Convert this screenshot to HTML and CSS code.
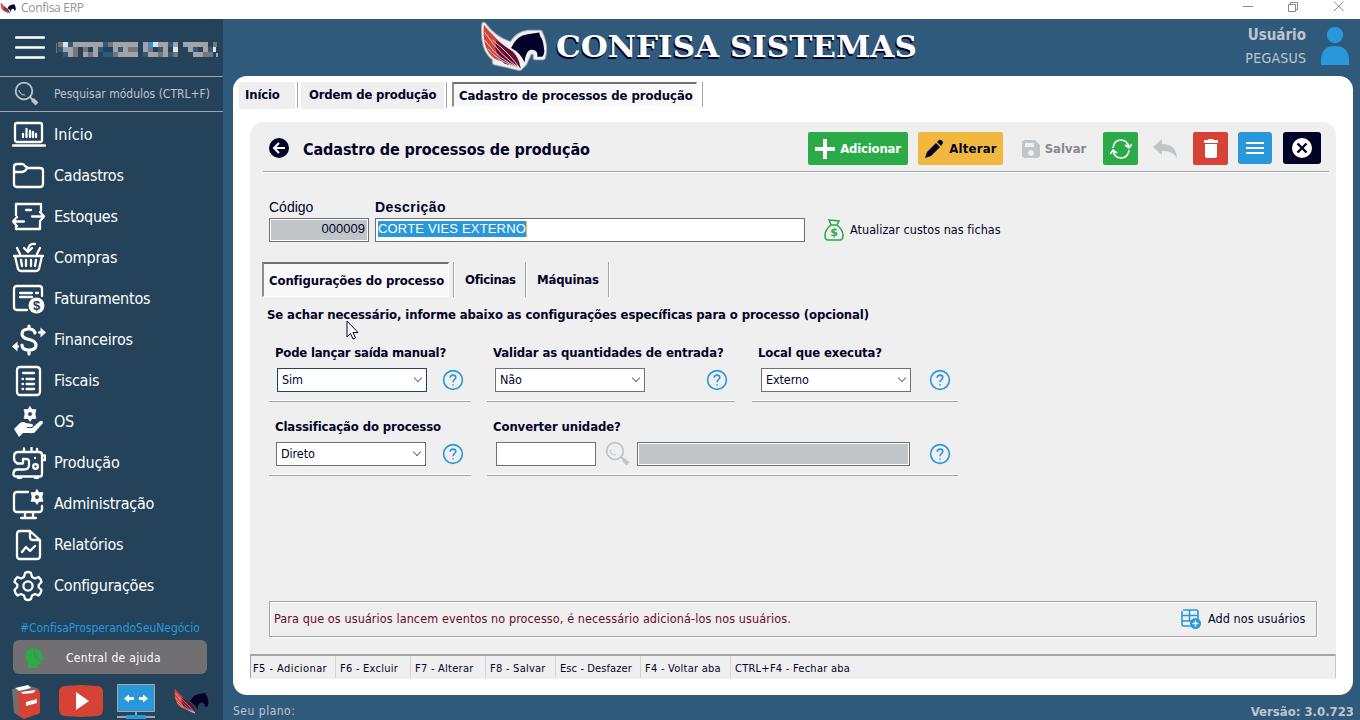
FILE: index.html
```html
<!DOCTYPE html>
<html lang="pt-BR">
<head>
<meta charset="utf-8">
<title>Confisa ERP</title>
<link rel="stylesheet" href="styles.css">
</head>
<body>
<svg class="defs" width="0" height="0">
  <defs>
    <symbol id="pegasus" viewBox="0 0 66 48">
      <path class="wing-a" d="M3 1C2 17 4 29 14 36L40 46C34 28 18 20 3 1Z"/>
      <path class="wing-b" d="M16 17L33 29Q39 35 41 46L24 41Q16 32 15 25Z"/>
      <path class="feather" d="M4 9Q20 33 40 46M4 17Q18 37 40 46M7 26Q20 40 40 46M12 17Q30 31 40 46"/>
      <path class="horse" d="M31 25Q37 12 48 11L60 9L61 13Q64 16 65 26Q66 31 63 34L58 34Q59 28 54 27Q49 26 47 31Q45 35 45 40Q41 30 31 25Z"/>
    </symbol>
    <symbol id="help" viewBox="0 0 22 22">
      <circle cx="11" cy="11" r="9.4"/><path d="M8.2 8.8Q8.2 6.1 11 6.1T13.8 8.6C13.8 10.5 11 10.6 11 13.2M11 15.2V16.6"/>
    </symbol>
    <symbol id="lens" viewBox="0 0 26 26">
      <circle cx="10" cy="10" r="8.3" stroke-width="1.8"/><path d="M5 9Q6 14 11 14" stroke-width="1.2"/><path d="M16 16L19 19" stroke-width="2"/><path d="M18.5 18.5L23 23" stroke-width="4"/>
    </symbol>
    <symbol id="gear" viewBox="0 0 32 32">
      <path d="M13 3Q16 1 19 3L20 7L23 8.500L26.500 7Q29 9 29.500 12L26.700 15V17.500L29.500 20Q29 23.500 26.500 25.500L23 24L20 25.500L19 29Q16 31 13 29L12 25.500L9 24L5.500 25.500Q3 23.500 2.500 20L5.300 17V14.500L2.500 12Q3 9 5.500 7L9 8.500L12 7Z"/><circle cx="16" cy="16" r="4.600"/>
    </symbol>
    <symbol id="cog" viewBox="0 0 16 16">
      <path class="cog-body" fill-rule="evenodd" d="M8 .5L10 3.500L14 3.500L13 8L14 12.500L10 12.500L8 15.500L6 12.500L2 12.500L3 8L2 3.500L6 3.500ZM8 5.700A2.300 2.300 0 1 0 8.010 5.700Z"/>
    </symbol>
  </defs>
</svg>

<header class="titlebar">
  <svg class="app-icon" width="16" height="12"><use href="#pegasus"/></svg>
  <span class="app-name">Confisa ERP</span>
  <svg class="window-controls" width="106" height="19" viewBox="0 0 106 19">
    <path d="M1 6.500H11M46.500 4.500H53.500V11.500H46.500ZM48.500 4V2.500H55.500V9.500H54M92 1.500L101.500 11M101.500 1.500L92 11"/>
  </svg>
</header>

<div class="shell">
  <aside class="sidebar">
    <div class="brand">
      <svg width="30" height="26" viewBox="0 0 30 26"><path class="burger" d="M1 2.500H29M1 12.500H29M1 22.500H29"/></svg>
      <svg class="masked" width="162" height="16" viewBox="56 42 162 16">
        <path class="m-gray" d="M73 42h30v5h-30zM113 42h25v5h-25zM143 42h5v10h-5zM158 42h10v5h-10zM173 42h5v5h-5zM183 42h25v5h-25zM63 47h10v5h-10zM93 47h5v10h-5zM113 47h5v5h-5zM123 47h5v5h-5zM163 47h5v5h-5zM188 47h5v5h-5zM203 47h5v5h-5zM68 52h5v5h-5zM83 52h5v5h-5zM118 52h20v5h-20zM148 52h10v5h-10zM163 52h5v5h-5zM193 52h10v5h-10zM216 53h2v4h-2z"/>
        <path class="m-dark" d="M56 43h1v10h-1zM58 42h5v5h-5zM108 42h5v5h-5zM213 42h4v5h-4zM73 47h5v5h-5zM83 47h5v5h-5zM128 47h10v5h-10zM148 47h5v5h-5zM73 52h5v5h-5zM88 52h5v5h-5zM113 52h5v5h-5zM158 52h5v5h-5zM173 52h5v5h-5zM203 52h10v5h-10z"/>
        <path class="m-blue" d="M68 42h5v5h-5zM103 42h5v5h-5zM168 42h5v5h-5zM58 47h5v5h-5zM98 47h5v5h-5zM118 47h5v5h-5zM158 47h5v5h-5zM193 47h5v5h-5zM208 47h5v5h-5zM63 52h5v5h-5zM103 52h10v5h-10zM143 52h5v5h-5zM168 52h5v5h-5z"/>
        <path class="m-light" d="M63 42h5v5h-5zM153 42h5v5h-5zM173 47h5v5h-5zM213 47h3v5h-3z"/>
        <path class="m-cyan" d="M148 42h5v5h-5z"/>
      </svg>
    </div>
    <div class="search">
      <svg class="lens-icon" width="26" height="26"><use href="#lens"/></svg>
      <span>Pesquisar módulos (CTRL+F)</span>
    </div>
    <nav class="menu">
      <a class="item"><svg viewBox="0 0 34 32"><rect x="3" y="4" width="27" height="19" rx="2"/><path d="M1 26.500H33M11 18V15M14.500 18V10M18 18V12M21 18V13M24 18V15"/></svg><span class="s-ini">Início</span></a>
      <a class="item"><svg viewBox="0 0 34 32"><path d="M2 7Q2 4 5 4H10Q12 4 13 6L16 8H28Q31 8 31 11V24Q31 27 28 27H5Q2 27 2 24ZM3 12H10Q13 12 15 8"/></svg><span>Cadastros</span></a>
      <a class="item"><svg viewBox="0 0 34 32"><path d="M4 14V3H29V10M4 24V28H28V21M14 9H19M20 15.500H32M28 11L32 15.500L28 20M12 20.500H1M5 16L1 20.500L5 25"/></svg><span>Estoques</span></a>
      <a class="item"><svg viewBox="0 0 34 32"><path d="M2 14H31M3 14L6 27Q7 29 9 29H24Q26 29 27 27L30 14M8 12L5 6M25 12L28 6M9 18L10 24M14 18V24M19 18V24M24 18L23 24M23 2Q16 1 16 9M12 6L16 10L20 6"/></svg><span class="s-com">Compras</span></a>
      <a class="item"><svg viewBox="0 0 34 32"><path d="M15 27H5Q2 27 2 24V6Q2 3 5 3H27Q30 3 30 6V13M8 10H20M24 10H26M8 14H20"/><circle class="solid" cx="24.500" cy="22.500" r="8"/><text class="coin" x="24.500" y="27">$</text></svg><span>Faturamentos</span></a>
      <a class="item"><svg viewBox="0 0 34 32"><path class="heavy" d="M23 9Q22 5 17 5Q10 5 10 10Q10 14 17 15.500Q24 17 24 21Q24 26 17 26Q10 26 10 21M17 2V5M17 26V30"/><path d="M27 8.500H31M6 22.500H2"/><path class="solid" d="M28.500 3.500L34 8.500L28.500 13.500ZM5.500 17.500L0 22.500L5.500 27.500Z"/></svg><span class="s-fin">Financeiros</span></a>
      <a class="item"><svg viewBox="0 0 34 32"><rect x="5" y="2" width="23" height="28" rx="3"/><path d="M11 8H22M14.500 14H22M14.500 19H22M14.500 24H22M10.500 14H11M10.500 19H11M10.500 24H11"/></svg><span>Fiscais</span></a>
      <a class="item"><svg viewBox="0 0 34 32"><use href="#cog" x="10" y="0" width="16" height="16"/><path class="solid" d="M2 23L8 17Q11 15 14 17L20 18Q22 19 20 21H15V22H20L28 15Q31 14 31 17L24 25Q22 28 18 27L11 27L7 31Z"/></svg><span>OS</span></a>
      <a class="item"><svg viewBox="0 0 34 32"><path d="M5 16Q2 15 2 10Q2 5 6 5H27Q30 5 30 8V27Q30 29.500 28 29.500H4Q1 29.500 1.500 26Q2 22.500 5 22.500H12Q17 22.500 17 18V14.500Q17 12 14 12H11V16.500H5M12 4V1.500M19.500 4V.5M25 4V2M30 8.500H33V13H30M6 31H9M23 31H26"/><circle cx="23.500" cy="19.500" r="2.300"/><path d="M23 11V11.200"/></svg><span class="s-pro">Produção</span></a>
      <a class="item"><svg viewBox="0 0 34 32"><path d="M16 4H5Q2 4 2 7V21Q2 24 5 24H27Q30 24 30 21V18M13 24V29M21 24V29M9 30H24"/><use href="#cog" x="17" y="1" width="16" height="16"/></svg><span>Administração</span></a>
      <a class="item"><svg viewBox="0 0 34 32"><path d="M8 2H18L28 11V27Q28 30 25 30H8Q5 30 5 27V5Q5 2 8 2ZM18 2V8Q18 11 21 11H28M10 23L14 18L18 22L23 17"/></svg><span>Relatórios</span></a>
      <a class="item"><svg viewBox="0 0 34 32"><use href="#gear" width="32" height="32"/></svg><span>Configurações</span></a>
    </nav>
    <div class="hashtag">#ConfisaProsperandoSeuNegócio</div>
    <button class="help-center">
      <svg width="20" height="22" viewBox="0 0 20 22"><path class="green" d="M3 20V15Q-1 10 2 4Q4 1 9 1V9L17 16L14 18Q13 17 12 18V21H3ZM10 1Q17 2 17 9L19 12L17 13V15L10 8Z"/></svg>
      <span>Central de ajuda</span>
    </button>
    <div class="dock">
      <svg width="30" height="36" viewBox="0 0 30 36"><path fill="#716f72" d="M0 5L18 2L27 5V30L9 33L2 29Z"/><path fill="#fff" d="M3 4L16 1L19 4L7 7Z"/><path fill="#d64235" d="M6 8L24 5L28 8V29L12 35L7 32Z"/><path fill="#fff" d="M9 8L24 6L21 9L11 10ZM14 18L25 15V19L14 22Z"/></svg>
      <svg width="44" height="36" viewBox="0 0 44 36"><path fill="#d64235" d="M5 2L22 1L39 2Q44 3 44 8V25Q44 31 39 32L22 33L5 32Q0 31 0 25V8Q0 3 5 2Z"/><path fill="#fff" d="M17 8L30 17L17 26Z"/></svg>
      <svg width="38" height="36" viewBox="0 0 38 36"><path fill="#2998da" stroke="#a3a5aa" d="M.5.5H37.500V27.500H.5Z"/><path stroke="#fff" stroke-width="3" d="M11 14.500H17M22 14.500H27"/><path fill="#fff" d="M7 14.500L12 10.500V18.500ZM31 14.500L26 10.500V18.500Z"/><path stroke="#a3a5aa" stroke-width="2" d="M19 28V31M0 33H38"/><path fill="#2998da" d="M9 31H29V35H9Z"/></svg>
      <svg width="36" height="36" viewBox="0 -4 36 36"><use class="plain" href="#pegasus" width="36" height="26"/></svg>
    </div>
  </aside>

  <div class="workspace">
    <div class="banner">
      <div class="logo">
        <svg width="68" height="54" viewBox="-2 -3 70 54"><path class="halo-outer" d="M3 1C2 17 4 29 14 36L14 40L40 46L45 41L50 30Q57 27 56 35L64 35Q68 23 61 9L48 9Q38 10 31 21Q14 16 3 1Z"/><path class="halo-inner" d="M3 1C2 17 4 29 14 36L14 40L40 46L45 41L50 30Q57 27 56 35L64 35Q68 23 61 9L48 9Q38 10 31 21Q14 16 3 1Z"/><use href="#pegasus" width="66" height="48"/></svg>
        <span class="wordmark">CONFISA SISTEMAS</span>
      </div>
      <div class="user"><div><b>Usuário</b><span>PEGASUS</span></div>
        <svg width="28" height="40" viewBox="0 0 28 40"><circle cx="14" cy="8" r="8.200"/><path d="M0 38V32Q1 19 14 19T28 32V38Z"/></svg>
      </div>
    </div>

    <main class="card">
      <div class="tabs">
        <span class="tab t1">Início</span><span class="tab t2">Ordem de produção</span><span class="tab t3 pressed">Cadastro de processos de produção</span>
      </div>
      <section class="panel">
        <div class="toolbar">
          <svg class="back" width="20" height="20" viewBox="0 0 20 20"><circle cx="10" cy="10" r="10"/><path d="M16 10H5M10 5L5 10L10 15"/></svg>
          <h1>Cadastro de processos de produção</h1>
          <div class="actions">
            <button class="btn add"><svg width="20" height="20" viewBox="0 0 20 20"><path fill="#fff" d="M8 0H12V8H20V12H12V20H8V12H0V8H8Z"/></svg><span>Adicionar</span></button>
            <button class="btn edit"><svg width="20" height="20" viewBox="0 0 20 20"><path fill="#03032a" d="M1 19L3 13L12 4L16 8L7 17ZM13 3L15 1Q17 0 19 3V4L17 7Z"/></svg><span>Alterar</span></button>
            <button class="btn save"><svg width="18" height="18" viewBox="0 0 18 18"><path fill="#c0c5c9" fill-rule="evenodd" d="M2 0H13L18 5V16L16 18H2L0 16V2ZM3 3V7H12V3ZM9 10A3 3 0 1 0 9.100 10Z"/></svg><span>Salvar</span></button>
            <button class="btn refresh"><svg width="22" height="22" viewBox="0 0 22 22"><path d="M3 10Q4 2 11 2Q17 2 19 9M15 7L19 10L22 6M19 12Q18 20 11 20Q5 20 3 13M0 16L3 12L7 15"/></svg></button>
            <button class="btn undo"><svg width="24" height="19" viewBox="0 0 24 19"><path fill="#c0c5c9" d="M0 8L9 0V5Q23 5 24 19Q19 11 9 12V16Z"/></svg></button>
            <button class="btn trash"><svg width="14" height="20" viewBox="0 0 14 20"><path fill="#fff" d="M0 1H4L5 0H9L10 1H14V4H0ZM1 5H13V18L11 19H3L1 18Z"/></svg></button>
            <button class="btn list"><svg width="18" height="14" viewBox="0 0 18 14"><path stroke="#fff" stroke-width="2" d="M0 2H18M0 7H18M0 12H18"/></svg></button>
            <button class="btn close"><svg width="20" height="20" viewBox="0 0 20 20"><circle fill="#fff" cx="10" cy="10" r="10"/><path stroke="#03032a" stroke-width="2.400" d="M5.500 5.500L14.500 14.500M14.500 5.500L5.500 14.500"/></svg></button>
          </div>
        </div>

        <div class="record">
          <label class="code"><span>Código</span><span class="box readonly">000009</span></label>
          <label class="desc"><b>Descrição</b><span class="box"><mark>CORTE VIES EXTERNO</mark></span></label>
          <div class="costs">
            <svg width="20" height="22" viewBox="0 0 20 22"><path d="M5 1L15 2L13 6Q19 11 19 16Q19 21 16 21H4Q1 21 1 16Q1 11 7 6ZM6 6H14"/><text x="10" y="17">$</text></svg>
            <span>Atualizar custos nas fichas</span>
          </div>
        </div>

        <div class="subtabs"><span class="sub u1 pressed">Configurações do processo</span><span class="sub u2">Oficinas</span><span class="sub u3">Máquinas</span></div>
        <div class="note"><p>Se achar necessário, informe abaixo as configurações específicas para o processo (opcional)</p>
          <svg class="cursor" width="13" height="20" viewBox="0 0 13 20"><path d="M1 1V17L4.500 13.500L7 19L9.500 18L7 12.500H12Z"/></svg>
        </div>

        <div class="fields">
          <div class="field f1"><b class="q1">Pode lançar saída manual?</b><div class="controls"><span class="select focus">Sim<i></i></span><svg class="help"><use href="#help"/></svg></div></div>
          <div class="field f2"><b class="q2">Validar as quantidades de entrada?</b><div class="controls"><span class="select">Não<i></i></span><svg class="help"><use href="#help"/></svg></div></div>
          <div class="field f3"><b class="q3">Local que executa?</b><div class="controls"><span class="select">Externo<i></i></span><svg class="help"><use href="#help"/></svg></div></div>
          <div class="field f4"><b class="q4">Classificação do processo</b><div class="controls"><span class="select">Direto<i></i></span><svg class="help"><use href="#help"/></svg></div></div>
          <div class="field f5"><b class="q5">Converter unidade?</b><div class="controls"><span class="unit"></span><svg class="lens-icon" width="26" height="26"><use href="#lens"/></svg><span class="unit-name"></span><svg class="help"><use href="#help"/></svg></div></div>
        </div>

        <div class="notice"><span class="warning">Para que os usuários lancem eventos no processo, é necessário adicioná-los nos usuários.</span>
          <svg width="21" height="21" viewBox="0 0 21 21"><path class="grid" d="M2 1H15Q17 1 17 3V10M10 17H3Q1 17 1 15V2M1 6.500H17M1 12H10M8.500 1V12"/><circle cx="14.500" cy="14.500" r="5.500"/><path class="plus" d="M11.500 14.500H17.500M14.500 11.500V17.500"/></svg>
          <span class="add-users">Add nos usuários</span>
        </div>

        <footer class="shortcuts"><span class="k1">F5 - Adicionar</span><span class="k2">F6 - Excluir</span><span class="k3">F7 - Alterar</span><span class="k4">F8 - Salvar</span><span class="k5">Esc - Desfazer</span><span class="k6">F4 - Voltar aba</span><span class="k7">CTRL+F4 - Fechar aba</span></footer>
      </section>
    </main>
    <div class="bottom"><span>Seu plano:</span><b>Versão: 3.0.723</b></div>
  </div>
</div>
</body>
</html>
```
FILE: styles.css
```css
* { box-sizing: border-box; }
body { margin: 0; width: 1360px; height: 720px; overflow: hidden; background: #305a7c; color: #03032a; font: 12px/16px "DejaVu Sans Condensed", "DejaVu Sans", sans-serif; font-stretch: condensed; white-space: nowrap; }
button { border: 0; padding: 0; font: inherit; color: inherit; letter-spacing: inherit; }
svg { display: block; flex: none; fill: none; }
.defs { position: absolute; }

.wing-a { fill: #d64235; }
.wing-b { fill: #6b0a2b; }
.feather { stroke: #d9dce0; stroke-width: 1; fill: none; }
.horse { fill: #03032a; }

.titlebar { height: 19px; background: #fff; display: flex; align-items: flex-start; }
.app-icon { margin-top: 2px; }
.app-name { margin-left: 5px; font: 12px/16px "Open Sans", sans-serif; letter-spacing: -.3px; color: #939398; flex: 1; }
.window-controls { margin-right: 12px; stroke: #85878b; }

.shell { display: flex; height: 701px; }
.sidebar { width: 223px; background: #24425a; display: flex; flex-direction: column; color: #fff; }
.brand { height: 58px; border-bottom: 1px solid #a3a5aa; padding: 16px 0 0 15px; display: flex; gap: 11px; }
.masked { margin-top: 7px; shape-rendering: crispEdges; }
.m-gray { fill: #a3a2a7; } .m-dark { fill: #767579; } .m-blue { fill: #305a7c; } .m-light { fill: #dfe3e6; } .m-cyan { fill: #2998da; }
.burger { stroke: #fff; stroke-width: 2.4; stroke-linecap: round; }
.search { height: 36px; border-bottom: 1px solid #a3a5aa; display: flex; align-items: center; padding: 1px 0 0 14px; gap: 14px; color: #c0c5c9; }
.lens-icon { fill: none; stroke: #c0c5c9; }
.menu { padding-top: 1px; }
.item { display: flex; align-items: center; height: 41px; padding: 2px 0 0 12px; gap: 8px; font-size: 16px; line-height: 20px; letter-spacing: -.24px; }
.s-ini { letter-spacing: .1px; } .s-com, .s-pro { letter-spacing: -.12px; } .s-fin { letter-spacing: -.18px; }
.item svg { width: 34px; height: 32px; stroke: #fff; stroke-width: 2.3; stroke-linecap: round; stroke-linejoin: round; }
.item .solid { fill: #fff; stroke: none; }
.item .heavy { stroke-width: 3.2; }
.item .coin { font: bold 13px "Liberation Sans", sans-serif; text-anchor: middle; fill: #24425a; stroke: none; }
.cog-body { fill: #fff; stroke-width: .6; }
.hashtag { margin: 15px 0 0 20px; height: 16px; color: #2998da; letter-spacing: -.03px; }
.help-center { width: 194px; height: 34px; margin: 4px 0 0 13px; border-radius: 6px; background: #716f72; color: #fff; display: flex; align-items: center; padding: 1px 0 0 12px; gap: 21px; letter-spacing: .33px; }
.green { fill: #2bab48; }
.dock { display: flex; margin: 10px 0 0 12px; }
.dock svg:nth-child(2) { margin-left: 17px; }
.dock svg:nth-child(3) { margin-left: 14px; }
.dock svg:nth-child(4) { margin-left: 18px; }

.workspace { flex: 1; padding-left: 10px; padding-right: 7px; }
.banner { height: 57px; display: flex; justify-content: space-between; }
.logo { display: flex; margin-left: 246px; width: 440px; }
.logo svg { margin-top: 1px; }
.halo-outer { stroke: #a3a5aa; stroke-width: 5.5; stroke-linejoin: round; fill: #fff; }
.halo-inner { stroke: #eef0f2; stroke-width: 3.5; stroke-linejoin: round; fill: #eef0f2; }
.wordmark { font: bold 29px/56px "DejaVu Serif", serif; margin-left: 9px; color: #fff; text-shadow: -1px 2px 0 #03032a; transform: scaleX(1.07); transform-origin: left; }
.user { display: flex; gap: 15px; margin-right: 4px; color: #c0c5c9; text-align: right; font-size: 14px; line-height: 23px; padding-top: 5px; }
.user b, .user span { display: block; }
.user b { font-size: 15px; }
.user span { letter-spacing: .25px; margin-right: -.25px; }
.user svg { fill: #2998da; margin-top: 3px; }

.card { height: 619px; background: #fff; border-radius: 14px; padding: 6px 17px 0 6px; }
.tabs { display: flex; height: 40px; font-weight: bold; font-size: 13px; line-height: 25px; }
.tab { position: relative; height: 27px; background: #efefef; }
.tab::after, .sub::after { content: ""; position: absolute; top: 0; bottom: 1px; width: 1px; background: #a3a5aa; }
.t1 { width: 56px; padding-left: 6px; letter-spacing: -.15px; } .t1::after { right: -3px; }
.t2 { width: 143px; margin-left: 6px; padding-left: 8px; letter-spacing: -.18px; } .t2::after { right: -3px; }
.t3.pressed { width: 245px; height: 25px; margin-left: 8px; padding-left: 5px; line-height: 23px; letter-spacing: -.06px; } .t3::after { right: -7px; top: -2px; bottom: -1px; }
.pressed { background: #f8f8f8; border: 1px solid #fff; border-top: 2px solid #716f72; border-left: 2px solid #8d8c90; }
.panel { width: 1086px; height: 557px; margin-left: 11px; background: #efefef; border-radius: 14px 14px 0 0; display: flex; flex-direction: column; }

.toolbar { height: 50px; margin: 0 7px 0 13px; padding-left: 6px; border-bottom: 1px solid #a3a5aa; box-shadow: 0 1px #fff; display: flex; align-items: flex-start; }
.back { margin-top: 16px; }
.back circle { fill: #03032a; } .back path { stroke: #fff; stroke-width: 2; }
h1 { margin: 18px 0 0 14px; font-size: 16px; line-height: 20px; flex: 1; letter-spacing: -.1px; }
.actions { display: flex; margin: 10px 8px 0 0; font-weight: bold; font-size: 13px; }
.btn { display: flex; align-items: center; justify-content: center; height: 33px; border-radius: 2px; background: none; }
.add { width: 100px; background: #2bab48; color: #fff; gap: 5px; letter-spacing: -.2px; }
.edit { width: 85px; margin-left: 10px; background: #f0b83f; gap: 5px; letter-spacing: .2px; }
.save { width: 66px; margin-left: 18px; color: #88898d; gap: 5px; }
.refresh { width: 35px; margin-left: 16px; background: #2bab48; } .refresh svg { stroke: #fff; stroke-width: 1.6; }
.undo { width: 24px; margin-left: 15px; }
.trash { width: 35px; margin-left: 16px; background: #d64235; }
.list { width: 34px; height: 32px; margin-left: 10px; background: #2998da; border-radius: 3px; }
.close { width: 38px; height: 32px; margin-left: 11px; background: #03032a; border-radius: 3px; }

.record { display: flex; margin: 27px 0 0 19px; height: 43px; font: 14px/16px "Liberation Sans", Arial, sans-serif; }
.record label > span:first-child, .record b { display: block; height: 19px; }
.record b { letter-spacing: .45px; }
.code { width: 100px; margin-right: 6px; }
.desc { width: 430px; }
.record label .box { display: block; height: 24px; border: 1px solid #716f72; background: #fff; padding: 2px; font-size: 13px; }
.record label .readonly { background: #c0c5c9; box-shadow: inset 0 0 0 1px #fff; text-align: right; padding-right: 3px; }
mark { display: inline-block; height: 16px; line-height: 16px; width: 149px; letter-spacing: .17px; color: #fff; background: #2998da; border-right: 1px solid #f0b83f; }
.costs { display: flex; align-items: center; margin: 20px 0 0 19px; height: 22px; gap: 6px; font: 12.5px/18px "DejaVu Sans Condensed", "DejaVu Sans", sans-serif; letter-spacing: .04px; }
.costs path { stroke: #2bab48; stroke-width: 1.6; }
.costs text { font: bold 11px "DejaVu Sans", sans-serif; text-anchor: middle; fill: #2bab48; }

.subtabs { display: flex; margin: 20px 0 0 12px; height: 35px; font-weight: bold; font-size: 13px; line-height: 35px; letter-spacing: -.11px; }
.sub { position: relative; }
.sub::after { top: 0; bottom: 0; box-shadow: 1px 0 #fff; }
.u1 { width: 187px; padding-left: 5px; height: 35px; line-height: 33px; } .u1::after { right: -6px; top: -2px; bottom: -1px; }
.u2 { width: 71px; margin-left: 5px; padding-left: 11px; letter-spacing: -.3px; } .u2::after { right: -1px; }
.u3 { width: 83px; padding-left: 12px; letter-spacing: -.2px; } .u3::after { right: -1px; }
.note { position: relative; margin: 9px 0 0 17px; height: 38px; font-weight: bold; font-size: 13px; line-height: 17px; letter-spacing: -.11px; }
.note p { margin: 0; }
.cursor { position: absolute; left: 79px; top: 14px; fill: #fff; stroke: #03032a; }

.fields { display: grid; grid-template-columns: 202px 247px 206px; column-gap: 17px; row-gap: 0; margin-left: 19px; grid-template-rows: 74px 74px; font-size: 12.5px; }
.field { height: 58px; border-bottom: 1px solid #a3a5aa; box-shadow: inset 0 -1px #fff; padding-left: 6px; }
.field b { display: block; height: 24px; font-size: 13px; line-height: 17px; letter-spacing: -.11px; }
.field .q1 { letter-spacing: -.22px; }
.f5 { grid-column: 2 / 4; }
.f2, .f5 { margin-left: -1px; }
.controls { display: flex; align-items: center; height: 24px; }
.select { position: relative; width: 150px; height: 24px; border: 1px solid #716f72; background: #fff; padding: 3px 4px; letter-spacing: -.1px; }
.select.focus { border-color: #24425a; }
.select i { position: absolute; right: 5px; top: 6px; width: 6px; height: 6px; border: solid #716f72; border-width: 0 1px 1px 0; transform: rotate(45deg); }
.help { width: 22px; height: 22px; stroke: #2998da; stroke-width: 1.6; }
.f1 .select, .f2 .select { margin-left: 2px; } .f3 .select { margin-left: 3px; } .f4 .select { margin-left: 1px; }
.f1 .help { margin-left: 15px; } .f4 .help { margin-left: 16px; } .f2 .help { margin-left: 61px; } .f3 .help { margin-left: 18px; }
.unit { width: 100px; height: 24px; margin-left: 3px; border: 1px solid #716f72; background: #fff; }
.f5 .lens-icon { margin-left: 9px; }
.unit-name { width: 273px; height: 24px; margin-left: 6px; border: 1px solid #716f72; background: #c0c5c9; box-shadow: inset 0 0 0 1px #fff; }
.f5 .help { margin-left: 19px; }

.notice { width: 1048px; height: 36px; margin: 109px 0 0 19px; border: 1px solid #a3a5aa; box-shadow: inset 1px 1px #fff, 1px 1px #fff; display: flex; align-items: center; padding: 0 9px 0 4px; font-size: 12.5px; }
.warning { color: #6b0a2b; flex: 1; letter-spacing: .1px; }
.grid { stroke: #2998da; stroke-width: 1.6; } .notice circle { fill: #2998da; } .plus { stroke: #fff; stroke-width: 1.3; }
.add-users { width: 99px; margin-left: 6px; letter-spacing: .07px; }
.shortcuts { display: flex; width: 1086px; height: 24px; margin-top: 17px; border-top: 2px solid #a3a5aa; border-left: 1px solid #a3a5aa; border-right: 1px solid #c0c5c9; font-size: 11px; line-height: 25px; letter-spacing: .25px; }
.shortcuts span { padding-left: 4px; border-left: 1px solid #d3d4d6; }
.shortcuts .k1 { width: 84px; padding-left: 2px; border-left: 0; letter-spacing: .43px; }
.k2, .k3 { width: 75px; } .k4 { width: 70px; } .k5 { width: 85px; letter-spacing: .1px; } .k6 { width: 90px; }
.bottom { display: flex; justify-content: space-between; padding-top: 9px; color: #c0c5c9; margin-right: -1px; line-height: 15px; }
.bottom span { letter-spacing: .5px; }
.bottom b { font-size: 13px; }
```
